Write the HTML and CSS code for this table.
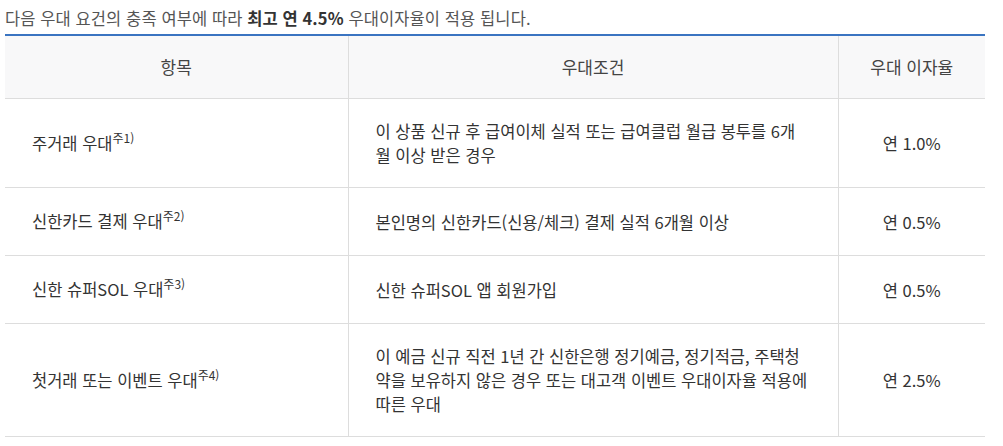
FILE: index.html
```html
<!DOCTYPE html>
<html lang="ko">
<head>
<meta charset="utf-8">
<title>우대이자율</title>
<link rel="stylesheet" href="styles.css">
</head>
<body>
<div class="wrap">
  <p class="intro">다음 우대 요건의 충족 여부에 따라 <strong>최고 연 4.5%</strong> 우대이자율이 적용 됩니다.</p>
  <table class="rate-table">
    <colgroup>
      <col class="c1">
      <col class="c2">
      <col class="c3">
    </colgroup>
    <thead>
      <tr>
        <th>항목</th>
        <th>우대조건</th>
        <th>우대 이자율</th>
      </tr>
    </thead>
    <tbody>
      <tr>
        <td class="item">주거래 우대<sup>주1)</sup></td>
        <td class="cond">이 상품 신규 후 급여이체 실적 또는 급여클럽 월급 봉투를 6개월 이상 받은 경우</td>
        <td class="rate">연 1.0%</td>
      </tr>
      <tr>
        <td class="item">신한카드 결제 우대<sup>주2)</sup></td>
        <td class="cond">본인명의 신한카드(신용/체크) 결제 실적 6개월 이상</td>
        <td class="rate">연 0.5%</td>
      </tr>
      <tr>
        <td class="item">신한 슈퍼SOL 우대<sup>주3)</sup></td>
        <td class="cond">신한 슈퍼SOL 앱 회원가입</td>
        <td class="rate">연 0.5%</td>
      </tr>
      <tr>
        <td class="item">첫거래 또는 이벤트 우대<sup>주4)</sup></td>
        <td class="cond">이 예금 신규 직전 1년 간 신한은행 정기예금, 정기적금, 주택청약을 보유하지 않은 경우 또는 대고객 이벤트 우대이자율 적용에 따른 우대</td>
        <td class="rate">연 2.5%</td>
      </tr>
    </tbody>
  </table>
</div>
</body>
</html>
```

FILE: styles.css
```css
html, body {
  margin: 0;
  padding: 0;
  background: #ffffff;
}

body {
  font-family: "Noto Sans CJK KR", "Noto Sans", sans-serif;
  font-size: 16.5px;
  color: #333333;
}

.wrap {
  width: 980px;
  padding: 6px 0 0 5px;
}

.intro {
  margin: 0 0 4px 0;
  line-height: 24px;
  color: #555555;
  letter-spacing: 0.1px;
}

.intro strong {
  color: #333333;
  font-weight: 700;
}

.rate-table {
  width: 980px;
  border-collapse: collapse;
  table-layout: fixed;
  border-top: 2px solid #3a74c1;
  border-bottom: 1px solid #cfcfcf;
}

.c1 { width: 343px; }
.c2 { width: 490px; }
.c3 { width: 147px; }

.rate-table th {
  background: #f8f8f9;
  font-weight: 400;
  font-size: 17px;
  color: #444444;
  line-height: 24px;
  padding: 19px 10px;
  text-align: center;
  border-bottom: 1px solid #dddddd;
  border-left: 1px solid #dddddd;
}

.rate-table th:first-child,
.rate-table td:first-child {
  border-left: none;
}

.rate-table td {
  line-height: 24px;
  padding: 20px 27px;
  vertical-align: middle;
  border-bottom: 1px solid #dddddd;
  border-left: 1px solid #dddddd;
  color: #333333;
}

.rate-table td.cond {
  padding-right: 30px;
}

.rate-table td.item {
  line-height: 27px;
}

.rate-table td.rate {
  text-align: center;
  padding: 20px 10px;
}

.rate-table sup {
  font-size: 12px;
  line-height: 0;
  vertical-align: 7px;
}
```
